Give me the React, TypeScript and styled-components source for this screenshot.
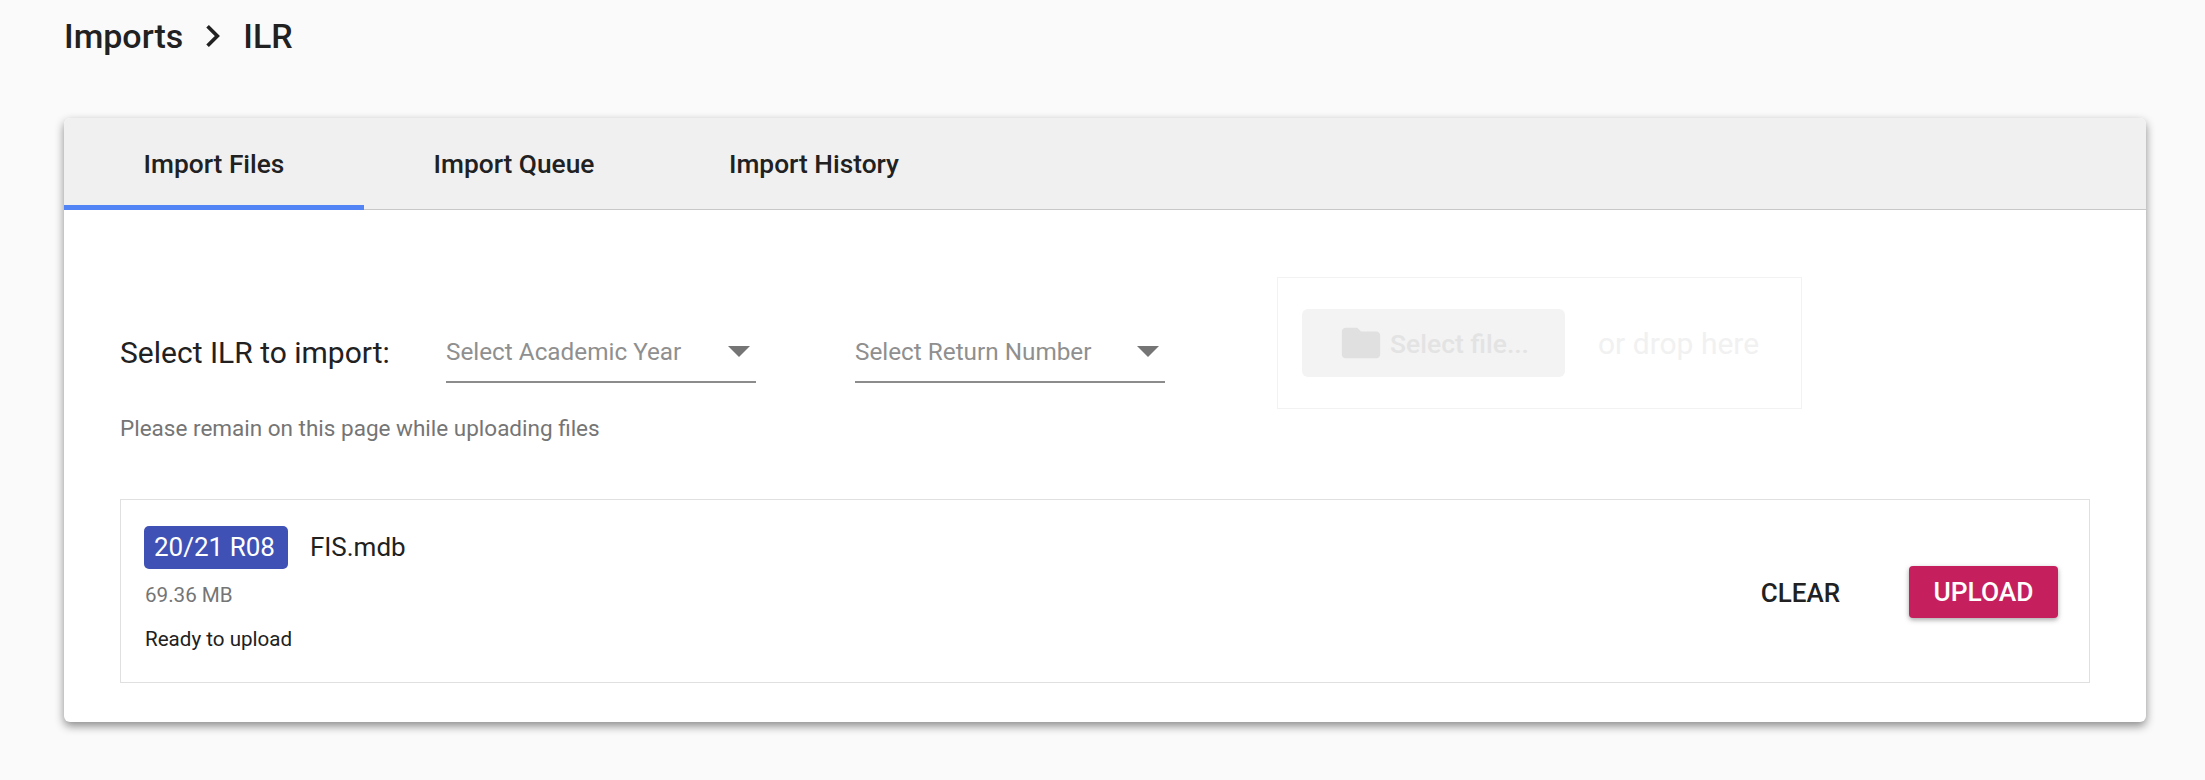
import { FC } from 'react';
import styled, { createGlobalStyle } from 'styled-components';

const GlobalStyle = createGlobalStyle`
	html, body {
		margin: 0;
		padding: 0;
		background: #fafafa;
		font-family: Roboto, "Liberation Sans", sans-serif;
		color: #212121;
	}
`;

const Page = styled.div`
	width: 2205px;
	height: 780px;
	box-sizing: border-box;
	padding: 17px 59px 0 64px;
	overflow: hidden;
`;

const Breadcrumb = styled.div`
	display: flex;
	align-items: center;
	height: 38px;
	font-size: 34px;
	font-weight: 500;
	gap: 17px;
`;

const Card = styled.div`
	margin-top: 63px;
	height: 604px;
	background: #fff;
	border-radius: 6px;
	box-shadow: 0 4px 10px rgba(0, 0, 0, 0.45);
	overflow: hidden;
`;

const TabBar = styled.div`
	display: flex;
	height: 92px;
	box-sizing: border-box;
	background: #f0f0f0;
	border-bottom: 1px solid #c8c8c8;
`;

const Tab = styled.div<{ $active?: boolean }>`
	width: 300px;
	height: 92px;
	box-sizing: border-box;
	display: flex;
	align-items: center;
	justify-content: center;
	font-size: 26.3px;
	font-weight: 500;
	padding-top: 4px;
	border-bottom: 5px solid ${(p) => (p.$active ? '#5384f5' : 'transparent')};
`;

const Body = styled.div`
	padding: 67px 56px 0;
`;

const TopRow = styled.div`
	display: flex;
	align-items: flex-start;
`;

const Controls = styled.div`
	width: 1157px;
	padding-top: 47px;
`;

const SelectRow = styled.div`
	display: flex;
	align-items: center;
`;

const Label = styled.div`
	width: 326px;
	font-size: 30px;
	padding-bottom: 3px;
`;

const SelectBox = styled.div`
	width: 310px;
	height: 59px;
	margin-right: 99px;
	box-sizing: border-box;
	display: flex;
	align-items: center;
	justify-content: space-between;
	padding: 0 6px 3px 0;
	border-bottom: 2px solid #8c8c8c;
	font-size: 24.3px;
	color: #8f8f8f;
`;

const Arrow = styled.span`
	width: 0;
	height: 0;
	border-left: 11px solid transparent;
	border-right: 11px solid transparent;
	border-top: 11px solid #757575;
`;

const Hint = styled.div`
	margin-top: 32px;
	font-size: 22.5px;
	color: #757575;
`;

const DropZone = styled.div`
	width: 525px;
	height: 132px;
	box-sizing: border-box;
	border: 1px solid #f2f2f2;
	display: flex;
	align-items: center;
	padding: 0 24px;
`;

const SelectFile = styled.div`
	width: 263px;
	height: 68px;
	border-radius: 6px;
	background: #f3f3f3;
	display: flex;
	align-items: center;
	justify-content: center;
	gap: 6px;
	font-size: 26.5px;
	font-weight: 500;
	color: #e3e3e3;
`;

const DropText = styled.div`
	margin-left: 33px;
	font-size: 30px;
	color: #f1f1f1;
`;

const FileRow = styled.div`
	margin-top: 58px;
	height: 184px;
	box-sizing: border-box;
	border: 1px solid #e0e0e0;
	display: flex;
	align-items: center;
	justify-content: space-between;
	padding: 0 31px 0 23px;
`;

const FileInfo = styled.div`
	display: flex;
	flex-direction: column;
	margin-bottom: 6px;
`;

const NameRow = styled.div`
	display: flex;
	align-items: center;
	gap: 22px;
`;

const Badge = styled.span`
	height: 43px;
	display: flex;
	align-items: center;
	padding: 0 13px 0 10px;
	border-radius: 5px;
	background: #3f51b5;
	color: #fff;
	font-size: 26px;
`;

const FileName = styled.span`
	font-size: 26px;
`;

const FileSize = styled.div`
	margin-top: 14px;
	margin-left: 1px;
	font-size: 20.6px;
	color: #757575;
`;

const Status = styled.div`
	margin-top: 20px;
	margin-left: 1px;
	font-size: 20.6px;
`;

const Actions = styled.div`
	display: flex;
	align-items: center;
	gap: 69px;
	margin-top: 2px;
`;

const ClearButton = styled.span`
	font-size: 26px;
	font-weight: 500;
	padding-top: 2px;
`;

const UploadButton = styled.span`
	width: 149px;
	height: 52px;
	display: flex;
	align-items: center;
	justify-content: center;
	border-radius: 4px;
	background: #c51f5d;
	color: #fff;
	font-size: 26.4px;
	font-weight: 500;
	box-shadow: 0 2px 5px rgba(0, 0, 0, 0.35);
`;

const FolderIcon: FC = () => (
	<svg width='46' height='46' viewBox='0 0 24 24' fill='#e0e0e0'>
		<path d='M10 4H4c-1.1 0-2 .9-2 2v12c0 1.1.9 2 2 2h16c1.1 0 2-.9 2-2V8c0-1.1-.9-2-2-2h-8l-2-2z' />
	</svg>
);

const ChevronIcon: FC = () => (
	<svg width='26' height='26' viewBox='0 0 24 24' fill='none' stroke='#212121' strokeWidth='3.4'>
		<path d='M7 3l9 9-9 9' />
	</svg>
);

const App: FC = () => (
	<Page>
		<GlobalStyle />
		<Breadcrumb>
			<span>Imports</span>
			<ChevronIcon />
			<span>ILR</span>
		</Breadcrumb>
		<Card>
			<TabBar>
				<Tab $active>Import Files</Tab>
				<Tab>Import Queue</Tab>
				<Tab>Import History</Tab>
			</TabBar>
			<Body>
				<TopRow>
					<Controls>
						<SelectRow>
							<Label>Select ILR to import:</Label>
							<SelectBox>
								Select Academic Year
								<Arrow />
							</SelectBox>
							<SelectBox>
								Select Return Number
								<Arrow />
							</SelectBox>
						</SelectRow>
						<Hint>Please remain on this page while uploading files</Hint>
					</Controls>
					<DropZone>
						<SelectFile>
							<FolderIcon />
							Select file...
						</SelectFile>
						<DropText>or drop here</DropText>
					</DropZone>
				</TopRow>
				<FileRow>
					<FileInfo>
						<NameRow>
							<Badge>20/21 R08</Badge>
							<FileName>FIS.mdb</FileName>
						</NameRow>
						<FileSize>69.36 MB</FileSize>
						<Status>Ready to upload</Status>
					</FileInfo>
					<Actions>
						<ClearButton>CLEAR</ClearButton>
						<UploadButton>UPLOAD</UploadButton>
					</Actions>
				</FileRow>
			</Body>
		</Card>
	</Page>
);

export default App;
